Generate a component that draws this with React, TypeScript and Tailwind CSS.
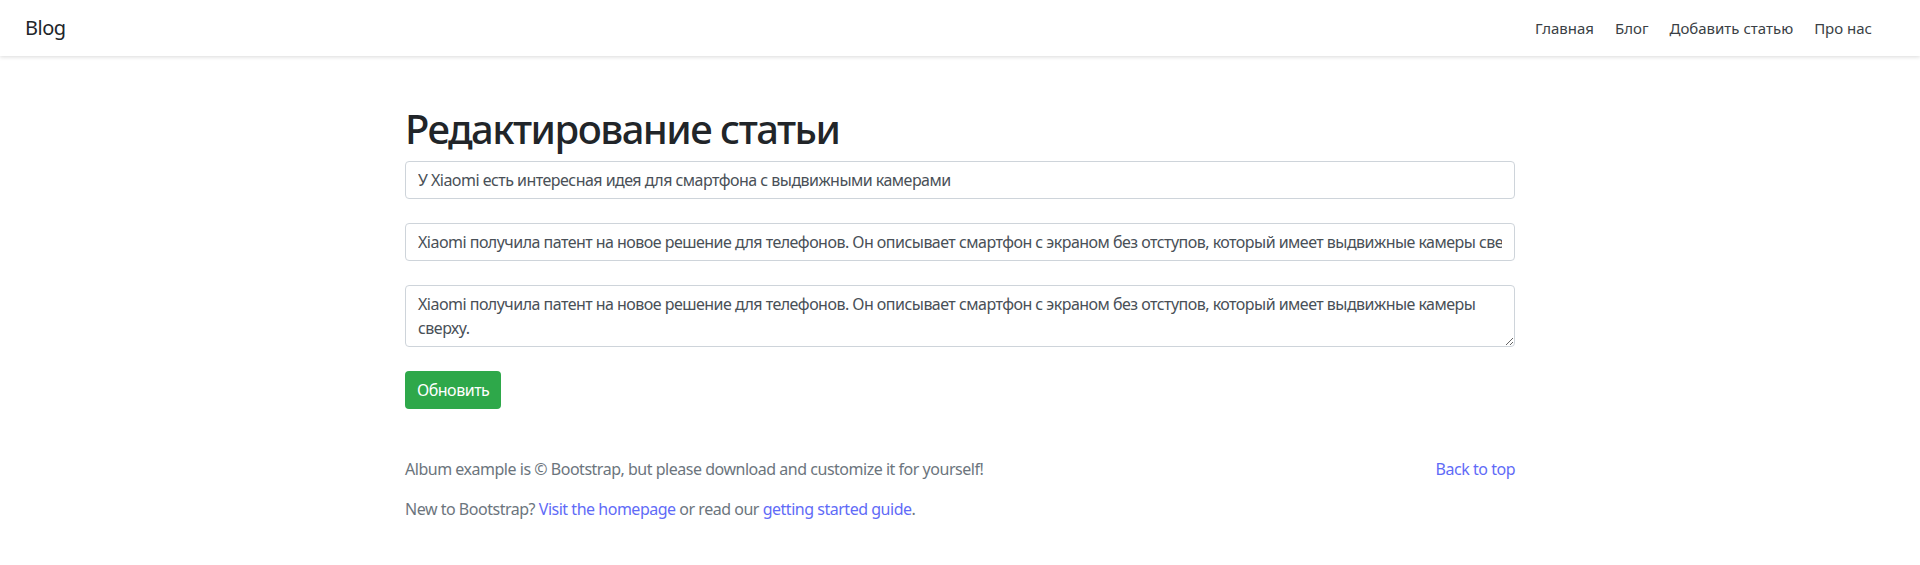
import React from 'react'

const NAV = ['Главная', 'Блог', 'Добавить статью', 'Про нас']

const TITLE = 'У Xiaomi есть интересная идея для смартфона с выдвижными камерами'
const ANONS =
  'Xiaomi получила патент на новое решение для телефонов. Он описывает смартфон с экраном без отступов, который имеет выдвижные камеры сверху.'

export default function App() {
  return (
    <div className="min-h-[565px] bg-white text-[#212529] font-['Segoe_UI','Noto_Sans',sans-serif] text-base tracking-[-0.03em]">
      {/* Navbar */}
      <nav className="h-14 flex items-center justify-between pl-[25px] pr-12 bg-white shadow-[0_1px_4px_rgba(0,0,0,0.15)]">
        <a href="#" className="text-xl text-[#212529]">Blog</a>
        <ul className="flex items-center gap-[21px] tracking-normal">
          {NAV.map(n => (
            <li key={n}>
              <a href="#" className="text-[15px] text-[#3a3f45]">{n}</a>
            </li>
          ))}
        </ul>
      </nav>

      {/* Edit form */}
      <main className="w-[1110px] mx-auto pt-[49px]">
        <h1 className="text-[40px] leading-[48px] font-medium mb-2 tracking-[-0.038em]">Редактирование статьи</h1>
        <form className="flex flex-col gap-6" onSubmit={e => e.preventDefault()}>
          <input
            type="text"
            defaultValue={TITLE}
            className="h-[38px] w-full border border-[#ced4da] rounded px-3 text-[#495057] tracking-[-0.033em] outline-none"
          />
          <input
            type="text"
            defaultValue={ANONS}
            className="h-[38px] w-full border border-[#ced4da] rounded px-3 text-[#495057] tracking-[-0.033em] outline-none"
          />
          <textarea
            defaultValue={ANONS}
            className="h-[62px] w-full border border-[#ced4da] rounded px-3 py-1.5 leading-6 text-[#495057] tracking-[-0.033em] outline-none"
          />
          <div>
            <button type="submit" className="h-[38px] px-3 rounded bg-[#2ea84a] text-white tracking-[-0.03em]">
              Обновить
            </button>
          </div>
        </form>
      </main>

      {/* Footer */}
      <footer className="w-[1110px] mx-auto py-12 text-[#6c757d]">
        <p className="flex justify-between mb-4 leading-6">
          <span>Album example is © Bootstrap, but please download and customize it for yourself!</span>
          <a href="#" className="text-[#5f6bf7]">Back to top</a>
        </p>
        <p className="leading-6">
          New to Bootstrap? <a href="#" className="text-[#5f6bf7]">Visit the homepage</a> or read our{' '}
          <a href="#" className="text-[#5f6bf7]">getting started guide</a>.
        </p>
      </footer>
    </div>
  )
}
